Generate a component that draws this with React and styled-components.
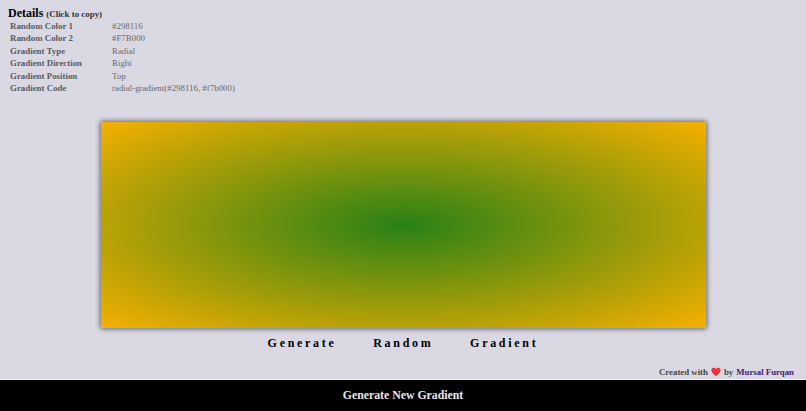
import styled, { createGlobalStyle } from 'styled-components'

const GlobalStyle = createGlobalStyle`
  html, body {
    margin: 0;
    padding: 0;
    height: 100%;
  }
  body {
    background: #dad9e3;
    font-family: "Liberation Serif", "Times New Roman", serif;
  }
`

const Page = styled.div`
  height: 411px;
  display: flex;
  flex-direction: column;
  overflow: hidden;
`
const Details = styled.section`
  padding: 6px 0 0 8px;
  height: 122px;
  box-sizing: border-box;
  flex: none;
`
const Title = styled.div`
  font-size: 12px;
  line-height: 14px;
  margin-bottom: -1px;
  font-weight: bold;
  color: #000;
  span {
    font-size: 8.9px;
    color: #333;
  }
`
const Rows = styled.div`
  padding-left: 2px;
`
const Row = styled.div`
  display: grid;
  grid-template-columns: 102px auto;
  height: 12.4px;
  line-height: 12.4px;
  font-size: 8.9px;
  cursor: pointer;
`
const Label = styled.div`
  font-weight: bold;
  color: #5a5a5a;
`
const Value = styled.div`
  color: #6a6a6a;
`
const Preview = styled.div`
  flex: none;
  width: 605px;
  height: 206px;
  margin-left: 101px;
  border-radius: 2px;
  background: radial-gradient(#298116, #f7b000);
  box-shadow: 0 0 5px 1px rgba(0, 0, 0, 0.55);
`
const Heading = styled.div`
  flex: none;
  margin-top: 9px;
  height: 12px;
  line-height: 12px;
  text-align: center;
  font-size: 12px;
  font-weight: bold;
  letter-spacing: 2.7px;
  word-spacing: 31px;
  color: #000;
`
const Credit = styled.div`
  flex: none;
  margin-top: 17px;
  padding-right: 12px;
  height: 12px;
  display: flex;
  justify-content: flex-end;
  align-items: center;
  gap: 3px;
  font-size: 8.8px;
  font-weight: bold;
  color: #444;
  a {
    color: #43206f;
    text-decoration: none;
  }
`
const Heart = styled.svg`
  width: 10px;
  height: 10px;
`
const Bar = styled.button`
  flex: none;
  margin-top: 1px;
  height: 31px;
  border: 0;
  border-top: 1px solid #f0eff4;
  box-sizing: content-box;
  padding: 0;
  background: #000;
  color: #e8e8e8;
  font-family: inherit;
  font-size: 11.8px;
  font-weight: bold;
  cursor: pointer;
`

const rows = [
  ['Random Color 1', '#298116'],
  ['Random Color 2', '#F7B000'],
  ['Gradient Type', 'Radial'],
  ['Gradient Direction', 'Right'],
  ['Gradient Position', 'Top'],
  ['Gradient Code', 'radial-gradient(#298116, #f7b000)'],
]

const App = () => {
  return (
    <Page>
      <GlobalStyle />
      <Details>
        <Title>
          Details <span>(Click to copy)</span>
        </Title>
        <Rows>
          {rows.map(([label, value]) => (
            <Row key={label}>
              <Label>{label}</Label>
              <Value>{value}</Value>
            </Row>
          ))}
        </Rows>
      </Details>
      <Preview />
      <Heading>Generate Random Gradient</Heading>
      <Credit>
        Created with
        <Heart viewBox="0 0 24 24">
          <path
            fill="#e8323c"
            d="M12 22 C6 17 1 13 1 7.5 C1 4 3.8 2 6.5 2 C8.8 2 10.8 3.2 12 5.2 C13.2 3.2 15.2 2 17.5 2 C20.2 2 23 4 23 7.5 C23 13 18 17 12 22 Z"
          />
        </Heart>
        by <a href="#">Mursal Furqan</a>
      </Credit>
      <Bar>Generate New Gradient</Bar>
    </Page>
  )
}

export default App
